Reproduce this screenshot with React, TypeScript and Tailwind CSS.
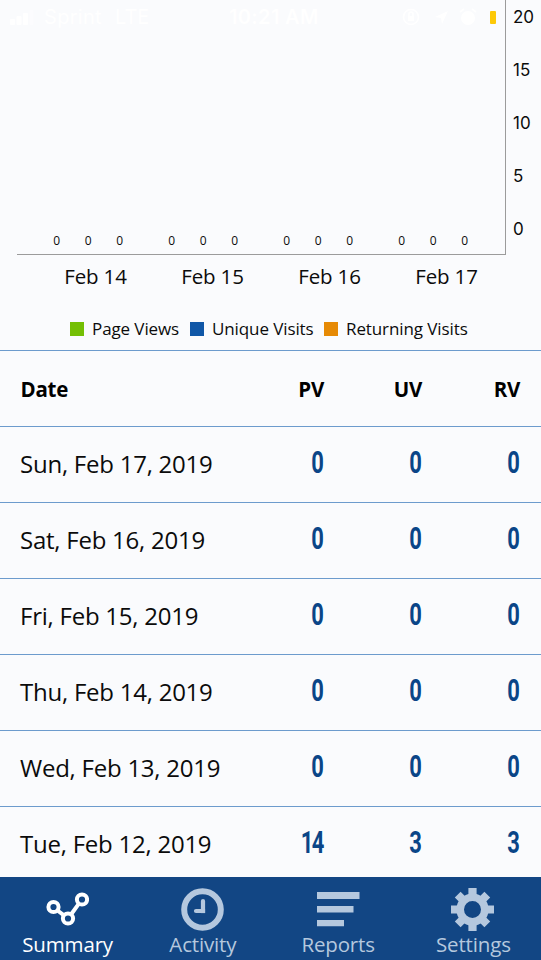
import { clsx } from 'clsx';

const TICKS = [20, 15, 10, 5, 0];

const DAYS = ['Feb 14', 'Feb 15', 'Feb 16', 'Feb 17'];

const LEGEND = [
  { label: 'Page Views', color: 'bg-[#74bf04]', width: 'w-[120px]' },
  { label: 'Unique Visits', color: 'bg-[#1057a7]', width: 'w-[134px]' },
  { label: 'Returning Visits', color: 'bg-[#e68a05]', width: 'w-[150px]' },
];

const ROWS = [
  { date: 'Sun, Feb 17, 2019', pv: 0, uv: 0, rv: 0 },
  { date: 'Sat, Feb 16, 2019', pv: 0, uv: 0, rv: 0 },
  { date: 'Fri, Feb 15, 2019', pv: 0, uv: 0, rv: 0 },
  { date: 'Thu, Feb 14, 2019', pv: 0, uv: 0, rv: 0 },
  { date: 'Wed, Feb 13, 2019', pv: 0, uv: 0, rv: 0 },
  { date: 'Tue, Feb 12, 2019', pv: 14, uv: 3, rv: 3 },
];

export default function App() {
  return (
    <div className="relative flex h-[960px] w-[541px] flex-col overflow-hidden bg-[#fafbfd] font-['Open_Sans',sans-serif] text-[#0b0b0b]">
      <StatusBar />
      <Chart />
      <div className="min-h-0 flex-1 overflow-hidden">
        <div className="grid h-[76px] grid-cols-[1fr_80px_98px_98px] items-center border-t border-[#6c9bcd] pt-px pr-[21px] pl-[20.500px] text-[20.500px] font-bold tracking-[-.25px] text-black">
          <div>Date</div>
          <div className="text-right">PV</div>
          <div className="text-right">UV</div>
          <div className="text-right">RV</div>
        </div>
        {ROWS.map((r) => (
          <div key={r.date} className="grid h-[76px] grid-cols-[1fr_80px_98px_98px] items-center border-t border-[#6c9bcd] pr-[21px] pl-[20px]">
            <div className="pb-px text-[24px] tracking-[-.24px] whitespace-nowrap">{r.date}</div>
            <Count value={r.pv} />
            <Count value={r.uv} />
            <Count value={r.rv} />
          </div>
        ))}
      </div>
      <nav className="grid h-[83px] shrink-0 grid-cols-4 bg-[#124684]">
        <Tab label="Summary" active><SummaryIcon /></Tab>
        <Tab label="Activity"><ClockIcon /></Tab>
        <Tab label="Reports"><ReportsIcon /></Tab>
        <Tab label="Settings"><GearIcon /></Tab>
      </nav>
    </div>
  );
}

// White system bar floating over the scrolled chart
function StatusBar() {
  return (
    <div className="absolute inset-x-0 top-0 z-10 h-[35px] font-['Inter',sans-serif] text-[20px] leading-[35px] text-white">
      <svg className="absolute top-[10px] left-[10px]" width="24" height="15" viewBox="0 0 24 15" fill="currentColor">
        <rect x="0" y="9" width="5" height="6" rx="1" />
        <rect x="6.5" y="6" width="5" height="9" rx="1" />
        <rect x="13" y="3" width="5" height="12" rx="1" />
        <rect x="19.500" y="0" width="4" height="15" rx="1" opacity=".4" />
      </svg>
      <span className="absolute left-[44px] tracking-[.3px]">Sprint</span>
      <span className="absolute left-[115px]">LTE</span>
      <span className="absolute left-[229px] font-semibold tracking-[.35px] whitespace-nowrap">10:21 AM</span>
      <svg className="absolute top-[8px] left-[402px]" width="78" height="18" viewBox="0 0 78 18" fill="none" stroke="currentColor" strokeWidth="1.6">
        <circle cx="9" cy="9" r="7.500" />
        <rect x="6" y="8" width="6" height="5" fill="currentColor" stroke="none" />
        <path d="M7 8V6a2 2 0 0 1 4 0v2" />
        <path d="M46 3 33 9l6 1 1 6z" fill="currentColor" stroke="none" />
        <circle cx="66" cy="10" r="7" fill="currentColor" stroke="none" />
        <path d="m58 4 4-3M74 4l-4-3" />
      </svg>
      <div className="absolute top-[11px] left-[490px] h-[13px] w-[6px] rounded-[1px] bg-[#fdc908]" />
    </div>
  );
}

function Chart() {
  return (
    <div className="flex h-[350px] shrink-0 flex-col">
      <div className="flex h-[255px] pl-[17px]">
        <div className="flex w-[489px] items-end border-r border-b border-[#9b9b9b] pl-[24px]">
          {DAYS.map((d) => (
            <div key={d} className="flex w-[115px] pb-[5px] text-center text-[12px] leading-[16px]">
              <span className="w-[31.500px]">0</span>
              <span className="w-[31.500px]">0</span>
              <span className="w-[31.500px]">0</span>
            </div>
          ))}
        </div>
        <div className="-mt-[9px] flex flex-col pl-[7px] font-['Inter',sans-serif] text-[17px] leading-[53px]">
          {TICKS.map((t) => <div key={t} className="h-[53px]">{t}</div>)}
        </div>
      </div>
      <div className="flex pl-[37px] text-center text-[20.500px] leading-[43px] tracking-[-.15px]">
        {DAYS.map((d) => <div key={d} className="w-[117px]">{d}</div>)}
      </div>
      <div className="flex items-center pt-[19px] pl-[70px] text-[17px] leading-[24px] tracking-[-.1px] whitespace-nowrap">
        {LEGEND.map((l) => (
          <div key={l.label} className={clsx('flex items-center gap-[8px]', l.width)}>
            <span className={clsx('mb-px size-[14px] shrink-0', l.color)} />
            {l.label}
          </div>
        ))}
      </div>
    </div>
  );
}

function Count({ value }: { value: number }) {
  return (
    <div className="flex justify-end pb-[3px] font-['Roboto',sans-serif] text-[30.500px] leading-none font-bold text-[#0a4587]">
      <span className="mr-[1.500px] origin-right scale-x-[.72] tracking-[-2px]">{value}</span>
    </div>
  );
}

function Tab({ label, active, children }: { label: string; active?: boolean; children: React.ReactNode }) {
  return (
    <div className={clsx('flex flex-col items-center pt-[11px] text-[20.500px] leading-[26px] tracking-[-.15px]', active ? 'text-white' : 'text-[#b5c8de]')}>
      {children}
      <span>{label}</span>
    </div>
  );
}

function SummaryIcon() {
  return (
    <svg width="43" height="43" viewBox="0 0 43 43" fill="none" stroke="currentColor" strokeWidth="4">
      <circle cx="7.500" cy="19" r="5.100" />
      <circle cx="22" cy="30.500" r="5.100" />
      <circle cx="36" cy="11.500" r="5.100" />
      <path d="m11.500 22.500 6.500 4.800M25.200 26.200l7.500-10.300" />
    </svg>
  );
}
function ClockIcon() {
  return (
    <svg width="43" height="43" viewBox="0 0 43 43" fill="none" stroke="currentColor">
      <circle cx="21.500" cy="21.500" r="18.300" strokeWidth="6" />
      <path d="M22 13v10h-7" strokeWidth="4.200" strokeLinecap="round" />
      <path d="M20 21h4.100v4.100H20z" fill="currentColor" stroke="none" />
    </svg>
  );
}
function ReportsIcon() {
  return (
    <svg width="43" height="43" viewBox="0 0 43 43" fill="currentColor">
      <path d="M0 4h42.500v7H0zM0 18h36.500v6.500H0zM0 32h27v6.200H0z" />
    </svg>
  );
}
// Eight teeth around a ring
function GearIcon() {
  return (
    <svg className="-ml-px" width="43" height="43" viewBox="0 0 43 43" fill="none" stroke="currentColor">
      <circle cx="21.500" cy="21.500" r="12.300" strokeWidth="7.600" />
      <path d="M21.500 0v8M21.500 35v8M0 21.500h8M35 21.500h8M6.700 6.700l6 6M30.300 30.300l6 6M36.300 6.700l-6 6M12.700 30.300l-6 6" strokeWidth="8.200" />
    </svg>
  );
}
